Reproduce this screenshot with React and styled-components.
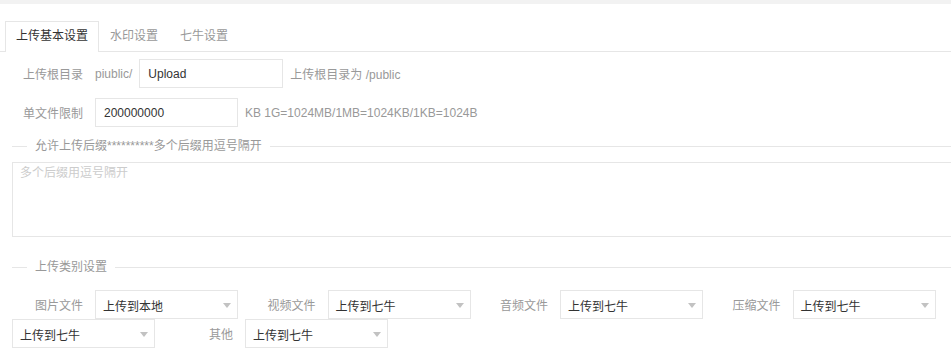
import React from "react";
import styled, { createGlobalStyle } from "styled-components";

const Global = createGlobalStyle`
  html, body { margin: 0; padding: 0; background: #fff; overflow: hidden; }
  body {
    font-family: "Liberation Sans", Arial, "Noto Sans CJK SC", sans-serif;
    font-size: 12px;
    color: #333;
  }
  * { box-sizing: border-box; }
`;

const Page = styled.div`
  width: 951px;
  height: 354px;
  overflow: hidden;
`;

const TopBand = styled.div`
  height: 4px;
  background: #f2f2f2;
`;

const TabBar = styled.ul`
  display: flex;
  align-items: flex-start;
  list-style: none;
  margin: 17px 0 0;
  padding: 0 0 0 5px;
  height: 31px;
  border-bottom: 1px solid #e6e6e6;
`;

const Tab = styled.li`
  height: ${(p) => (p.$active ? "31px" : "30px")};
  padding: 0 10px;
  line-height: 29px;
  border: 1px solid ${(p) => (p.$active ? "#e6e6e6" : "transparent")};
  border-bottom: none;
  background: #fff;
  color: ${(p) => (p.$active ? "#333" : "#999")};
  white-space: nowrap;
  cursor: pointer;
`;

const Row = styled.div`
  display: flex;
  align-items: center;
  height: 29px;
  margin-top: ${(p) => p.$mt || 0}px;
`;

const Label = styled.label`
  flex: none;
  width: 95px;
  padding-right: 12px;
  text-align: right;
  color: #999;
  white-space: nowrap;
`;

const Prefix = styled.span`
  color: #999;
  margin-right: 7px;
`;

const TextInput = styled.input`
  width: ${(p) => p.$w}px;
  height: 29px;
  border: 1px solid #e6e6e6;
  padding: 0 8px;
  font-family: "Liberation Sans", Arial, "Noto Sans CJK SC", sans-serif;
  font-size: 12px;
  color: #333;
  outline: none;
  background: #fff;
`;

const Hint = styled.span`
  margin-left: 7px;
  color: #999;
  white-space: nowrap;
`;

const Divider = styled.div`
  display: flex;
  align-items: center;
  height: 15px;
  margin: ${(p) => p.$mt}px 0 0 12px;
  color: #999;
  white-space: nowrap;
  &::before {
    content: "";
    width: 15px;
    height: 1px;
    background: #e6e6e6;
  }
  &::after {
    content: "";
    flex: 1;
    height: 1px;
    background: #e6e6e6;
  }
`;

const DividerText = styled.span`
  padding: 0 8px;
  line-height: 15px;
`;

const TextArea = styled.textarea`
  display: block;
  margin: 8px 0 0 12px;
  width: 1000px;
  height: 75px;
  border: 1px solid #e6e6e6;
  padding: 3px 7px;
  line-height: 15px;
  resize: none;
  font-family: "Liberation Sans", Arial, "Noto Sans CJK SC", sans-serif;
  font-size: 12px;
  color: #333;
  outline: none;
  &::placeholder { color: #ccc; }
`;

const SelectRow = styled.div`
  display: flex;
  align-items: center;
  padding-left: ${(p) => p.$pl}px;
  margin-top: ${(p) => p.$mt || 0}px;
`;

const SelectLabel = styled.label`
  flex: none;
  width: ${(p) => p.$w || 89.5}px;
  padding-right: 12px;
  text-align: right;
  color: #999;
  white-space: nowrap;
`;

const Select = styled.div`
  flex: none;
  display: flex;
  align-items: center;
  justify-content: space-between;
  width: 143px;
  height: 29px;
  border: 1px solid #e6e6e6;
  padding: 1px 6px 0 7px;
  background: #fff;
  color: #333;
  cursor: pointer;
`;

const Caret = styled.span`
  width: 0;
  height: 0;
  border-top: 5px solid #c2c2c2;
  border-left: 4px solid transparent;
  border-right: 4px solid transparent;
`;

const SelectBox = ({ value }) => (
  <Select>
    <span>{value}</span>
    <Caret />
  </Select>
);

export default function App() {
  return (
    <>
      <Global />
      <Page>
        <TopBand />
        <TabBar>
          <Tab $active>上传基本设置</Tab>
          <Tab>水印设置</Tab>
          <Tab>七牛设置</Tab>
        </TabBar>

        <Row $mt={7}>
          <Label>上传根目录</Label>
          <Prefix>piublic/</Prefix>
          <TextInput $w={144} defaultValue="Upload" readOnly />
          <Hint>上传根目录为 /public</Hint>
        </Row>

        <Row $mt={10}>
          <Label>单文件限制</Label>
          <TextInput $w={143} defaultValue="200000000" readOnly />
          <Hint>KB 1G=1024MB/1MB=1024KB/1KB=1024B</Hint>
        </Row>

        <Divider $mt={12}>
          <DividerText>允许上传后缀**********多个后缀用逗号隔开</DividerText>
        </Divider>
        <TextArea placeholder="多个后缀用逗号隔开" />

        <Divider $mt={23}>
          <DividerText>上传类别设置</DividerText>
        </Divider>

        <SelectRow $pl={5} $mt={15}>
          <SelectLabel $w={90}>图片文件</SelectLabel>
          <SelectBox value="上传到本地" />
          <SelectLabel>视频文件</SelectLabel>
          <SelectBox value="上传到七牛" />
          <SelectLabel>音频文件</SelectLabel>
          <SelectBox value="上传到七牛" />
          <SelectLabel>压缩文件</SelectLabel>
          <SelectBox value="上传到七牛" />
        </SelectRow>
        <SelectRow $pl={12}>
          <SelectBox value="上传到七牛" />
          <SelectLabel $w={90}>其他</SelectLabel>
          <SelectBox value="上传到七牛" />
        </SelectRow>
      </Page>
    </>
  );
}
